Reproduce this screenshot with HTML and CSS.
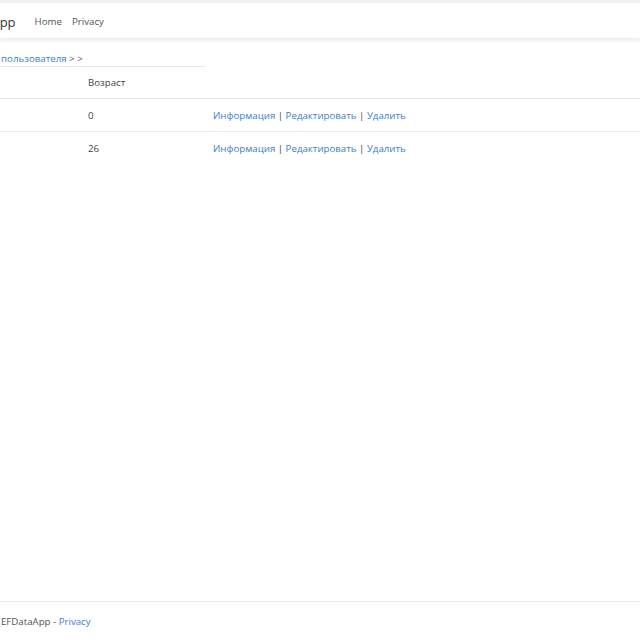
FILE: index.html
```html
<!DOCTYPE html>
<html lang="ru">
<head>
<meta charset="utf-8">
<title>EFDataApp</title>
<link rel="stylesheet" href="styles.css">
</head>
<body>
<div class="topline"></div>
<header class="navbar">
  <div class="container nav-inner">
    <a class="brand" href="#">EFDataApp</a>
    <a class="nav-link" href="#">Home</a>
    <a class="nav-link" href="#">Privacy</a>
  </div>
</header>
<main class="container main">
  <p class="crumbs"><a href="#">Добавить пользователя</a> &gt; &gt;</p>
  <table class="table">
    <thead>
      <tr><th class="c1">Имя</th><th class="c2">Возраст</th><th class="c3"></th></tr>
    </thead>
    <tbody>
      <tr><td class="c1">Том</td><td class="c2">0</td><td class="c3"><a href="#">Информация</a> | <a href="#">Редактировать</a> | <a href="#">Удалить</a></td></tr>
      <tr><td class="c1">Алиса</td><td class="c2">26</td><td class="c3"><a href="#">Информация</a> | <a href="#">Редактировать</a> | <a href="#">Удалить</a></td></tr>
    </tbody>
  </table>
</main>
<footer class="footer">
  <div class="container footer-inner">© 2020 - EFDataApp - <a href="#">Privacy</a></div>
</footer>
</body>
</html>
```
FILE: styles.css
```css
html, body {
  margin: 0;
  padding: 0;
  height: 100%;
}
body {
  font-family: "Open Sans", "Noto Sans", sans-serif;
  font-size: 9.7px;
  color: #444;
  background: #fff;
  display: flex;
  flex-direction: column;
  overflow: hidden;
}
a {
  color: #3b7dd0;
  text-decoration: none;
}
.container {
  margin-left: -47px;
}
.topline {
  height: 3px;
  background: #f1f1f1;
}
.navbar {
  height: 35px;
  background: #fff;
  box-shadow: 0 2px 3px rgba(0, 0, 0, 0.07);
  border-bottom: 1px solid #eee;
}
.nav-inner {
  display: flex;
  align-items: center;
  height: 100%;
  padding-top: 2px;
  box-sizing: border-box;
  margin-left: -51px;
}
.brand {
  font-size: 13px;
  color: #333;
  margin-right: 19px;
}
.nav-link {
  color: #555;
  margin-right: 10px;
}
.main {
  flex: 1;
  padding-top: 13px;
}
.crumbs {
  margin: 0;
  width: 252px;
  line-height: 13px;
  padding-bottom: 1px;
  border-bottom: 1px solid #e6e6e6;
  color: #555;
}
.table {
  border-collapse: collapse;
  width: 700px;
}
.table th, .table td {
  text-align: left;
  font-weight: normal;
  padding: 0;
  vertical-align: middle;
}
.table thead th {
  height: 31px;
  border-bottom: 1px solid #e4e4e4;
}
.table tbody td {
  height: 32px;
}
.table tbody tr:first-child td {
  border-bottom: 1px solid #ececec;
}
.c1 { width: 135px; }
.c2 { width: 125px; }
.footer {
  border-top: 1px solid #e8e8e8;
  height: 38px;
  display: flex;
  align-items: center;
  color: #555;
}
.footer-inner {
  margin-left: -40px;
}
```
